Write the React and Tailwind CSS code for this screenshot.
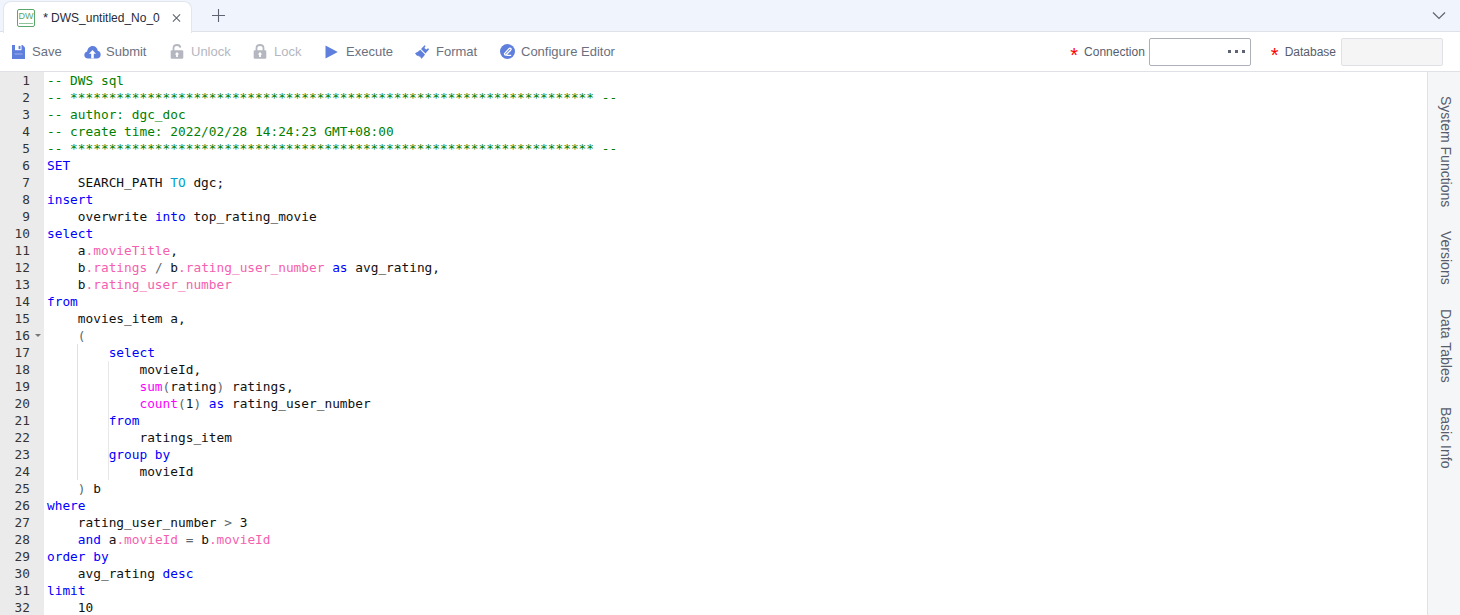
import React from "react";

const C = "text-[#008000]", K = "text-[#0000ff]", T = "text-[#00a0c8]", P = "text-[#f55fb0]", F = "text-[#ff00ff]", G = "text-[#5a6a70]";
const stars = "*".repeat(68);
const lines = [
  [["-- DWS sql", C]],
  [["-- " + stars + " --", C]],
  [["-- author: dgc_doc", C]],
  [["-- create time: 2022/02/28 14:24:23 GMT+08:00", C]],
  [["-- " + stars + " --", C]],
  [["SET", K]],
  [["    SEARCH_PATH "], ["TO", T], [" dgc;"]],
  [["insert", K]],
  [["    overwrite "], ["into", K], [" top_rating_movie"]],
  [["select", K]],
  [["    a"], [".movieTitle", P], [","]],
  [["    b"], [".ratings", P], [" "], ["/", G], [" b"], [".rating_user_number", P], [" "], ["as", K], [" avg_rating,"]],
  [["    b"], [".rating_user_number", P]],
  [["from", K]],
  [["    movies_item a,"]],
  [["    "], ["(", G]],
  [["        "], ["select", K]],
  [["            movieId,"]],
  [["            "], ["sum", F], ["(", G], ["rating"], [")", G], [" ratings,"]],
  [["            "], ["count", F], ["(", G], ["1"], [")", G], [" "], ["as", K], [" rating_user_number"]],
  [["        "], ["from", K]],
  [["            ratings_item"]],
  [["        "], ["group by", K]],
  [["            movieId"]],
  [["    "], [")", G], [" b"]],
  [["where", K]],
  [["    rating_user_number "], [">", G], [" 3"]],
  [["    "], ["and", K], [" a"], [".movieId", P], [" "], ["=", G], [" b"], [".movieId", P]],
  [["order by", K]],
  [["    avg_rating "], ["desc", K]],
  [["limit", K]],
  [["    10"]],
];

const Blue = "#5f7fdc";
const Gray = "#b4b7bf";

const Save = () => (
  <svg className="shrink-0 ml-px" width="13" height="14" viewBox="0 0 13 14"><path fill={Blue} d="M0 0H10.5L13 2.5V14H0z" /><rect x="3" y="0" width="6.5" height="5.2" fill="#fff" /><rect x="6.6" y="0.9" width="1.9" height="3.2" fill={Blue} /><rect x="2.5" y="8.5" width="8" height="1" fill="#fff" opacity="0.4" /></svg>
);
const Cloud = () => (
  <svg className="shrink-0" width="17" height="14" viewBox="0 0 17 14"><path fill={Blue} d="M4 13.5C1.8 13.5 0.3 12 0.3 10c0-1.8 1.2-3.1 2.8-3.4C3.6 3.2 5.8 1 8.6 1c2.6 0 4.7 1.9 5.2 4.8 1.6.4 2.9 1.9 2.9 3.9 0 2.2-1.7 3.8-3.8 3.8z" /><path fill="#fff" d="M8.5 5L12 8.8H9.8v4.7H7.2V8.8H5z" /></svg>
);
const LockI = ({ open }) => (
  <svg className="shrink-0" width="14" height="15" viewBox="0 0 14 15"><path fill="none" stroke={Gray} strokeWidth="1.8" d={open ? "M3.5 7V4.2C3.5 2.3 5 1 7 1s3.2 1.1 3.4 2.6" : "M3.5 7V4.2C3.5 2.3 5 1 7 1s3.5 1.3 3.5 3.2V7"} /><rect x="0.7" y="6.3" width="12.6" height="8.4" rx="1.2" fill={Gray} /><path fill="#fff" d="M7 8l2.2 2.4H7.9V13H6.1v-2.6H4.8z" /></svg>
);
const Play = () => (
  <svg className="shrink-0" width="13" height="14" viewBox="0 0 13 14"><path fill={Blue} d="M0.5 0.5L12.8 7L0.5 13.5z" /></svg>
);
const Brush = () => (
  <svg className="shrink-0" width="15" height="14" viewBox="0 0 15 14"><path fill={Blue} d="M9.6 0.2l1 0.9-1.2 1.9 1.8 1.5 1.9-1.3 1 1-3.6 4.2L6 4z" /><path fill={Blue} d="M5.2 4.8l4.8 4.6c-1.1 1.6-2 3-3.6 4.4L5.3 12 5 11l-.8 1-1-1.4-1 .3L0 8.2c2-.6 3.8-1.8 5.2-3.4z" /></svg>
);
const Conf = () => (
  <svg className="shrink-0" width="15" height="15" viewBox="0 0 15 15"><circle cx="7.5" cy="7.5" r="7.5" fill={Blue} /><path fill="none" stroke="#fff" strokeWidth="1.3" d="M4.5 9.6L9 4.6c.6-.6 1.4-.6 1.8-.1.4.5.3 1.1-.2 1.7L6.2 10.8c-.7.5-1.6.3-1.7-1.2zM6.5 11.3h4.7" /></svg>
);

const tools = [
  [<Save />, "Save", "w-[73px]", "w-[21px]", false],
  [<Cloud />, "Submit", "w-[86px]", "w-[22px]", false],
  [<LockI open />, "Unlock", "w-[83px]", "w-[21px]", true],
  [<LockI />, "Lock", "w-[72px]", "w-[21px]", true],
  [<Play />, "Execute", "w-[90px]", "w-[21px]", false],
  [<Brush />, "Format", "w-[85px]", "w-[21px]", false],
  [<Conf />, "Configure Editor", "w-[120px]", "w-[21px]", false],
];

function Tab() {
  return (
    <div className="flex items-center h-[32px] w-[189px] ml-[3px] mt-[1px] bg-white rounded-t-[8px] border-t border-x border-[#e2e6ee] pl-[13px] -mb-px relative shrink-0">
      <div className="w-[18px] h-[18px] rounded-[2px] border border-[#5ba66a] flex flex-col items-center justify-start shrink-0">
        <span className="text-[9px] leading-[12px] text-[#5ba66a]">DW</span>
        <span className="block w-[14px] h-[1.5px] bg-[#8fc49a] mt-[1px]" />
      </div>
      <span className="text-[12px] text-[#252b3a] ml-[8px] whitespace-nowrap"><span className="text-[13px] mr-[3px]">*</span>DWS_untitled_No_0</span>
      <svg className="ml-[12px] shrink-0" width="9" height="10" viewBox="0 0 10 10"><path d="M1 1L9 9M9 1L1 9" stroke="#5d6370" strokeWidth="1.2" /></svg>
    </div>
  );
}

export default function App() {
  return (
    <div className="h-[615px] w-[1460px] overflow-hidden flex flex-col bg-white font-['Liberation_Sans',Arial,sans-serif]">
      <div className="h-[32px] shrink-0 bg-[#f0f4fc] border-b border-[#dfe1e6] flex items-start">
        <Tab />
        <svg className="ml-[19px] mt-[8px] shrink-0" width="15" height="15" viewBox="0 0 15 15"><path d="M7.5 1V14M1 7.5H14" stroke="#5d6370" strokeWidth="1.1" /></svg>
        <svg className="ml-auto mr-[14px] mt-[11px] shrink-0" width="14" height="9" viewBox="0 0 14 9"><path d="M1 1.5L7 7.5L13 1.5" fill="none" stroke="#5d6370" strokeWidth="1.2" /></svg>
      </div>
      <div className="h-[40px] shrink-0 border-b border-[#dfe1e6] flex items-center pl-[11px] pr-[17px]">
        <div className="flex items-center">
          {tools.map(([icon, label, cls, slot, disabled]) => (
            <div key={label} className={"flex items-center whitespace-nowrap text-[13px] " + cls + " " + (disabled ? "text-[#b4b7bf]" : "text-[#6b7080]")}>
              <span className={"flex items-center shrink-0 " + slot}>{icon}</span><span>{label}</span>
            </div>
          ))}
        </div>
        <div className="ml-auto flex items-center text-[12px] text-[#575d6c]">
          <span className="text-[#ff0000] text-[20px] leading-[12px] mt-[6px] mr-[6px]">*</span>
          <span>Connection</span>
          <div className="ml-[4px] w-[102px] h-[28px] border border-[#adb0b8] rounded-[2px] flex items-center justify-end pr-[5px] gap-[4px]">
            <i className="block w-[3px] h-[3px] bg-[#5d6370]" /><i className="block w-[3px] h-[3px] bg-[#5d6370]" /><i className="block w-[3px] h-[3px] bg-[#5d6370]" />
          </div>
          <span className="text-[#ff0000] text-[20px] leading-[12px] mt-[6px] ml-[20px] mr-[6px]">*</span>
          <span>Database</span>
          <div className="ml-[5px] w-[102px] h-[28px] border border-[#dfe1e6] rounded-[2px] bg-[#f5f5f6]" />
        </div>
      </div>
      <div className="flex-1 min-h-0 flex">
        <div className="w-[44px] shrink-0 bg-[#ebebeb] text-[#333] font-['DejaVu_Sans_Mono',monospace] text-[12.8px] leading-[17px]">
          {lines.map((_, i) => (
            <div key={i} className="h-[17px] pr-[14px] text-right relative">
              {i + 1}
              {i === 15 && <span className="absolute right-[3px] top-[7px] w-0 h-0 border-x-[3px] border-x-transparent border-t-[3px] border-t-[#777]" />}
            </div>
          ))}
        </div>
        <div className="flex-1 min-w-0 pl-[3px] font-['DejaVu_Sans_Mono',monospace] text-[12.8px] leading-[17px] text-[#111] whitespace-pre relative">
          <div className="absolute left-[33px] top-[272px] h-[136px] w-px bg-[#e0e0e0]" />
          <div className="absolute left-[64px] top-[289px] h-[119px] w-px bg-[#e8e8e8]" />
          {lines.map((l, i) => (
            <div key={i} className="h-[17px]">
              {l.map(([t, c], j) => <span key={j} className={c}>{t}</span>)}
            </div>
          ))}
        </div>
        <div className="w-[33px] shrink-0 bg-[#f5f6f7] border-l border-[#dfe1e6] flex flex-col items-center pt-[24px] pl-[2px] text-[14px] text-[#575d6c]">
          <span className="[writing-mode:vertical-rl] whitespace-nowrap">System Functions</span>
          <span className="[writing-mode:vertical-rl] whitespace-nowrap mt-[24px]">Versions</span>
          <span className="[writing-mode:vertical-rl] whitespace-nowrap mt-[24px]">Data Tables</span>
          <span className="[writing-mode:vertical-rl] whitespace-nowrap mt-[24px]">Basic Info</span>
        </div>
      </div>
    </div>
  );
}
